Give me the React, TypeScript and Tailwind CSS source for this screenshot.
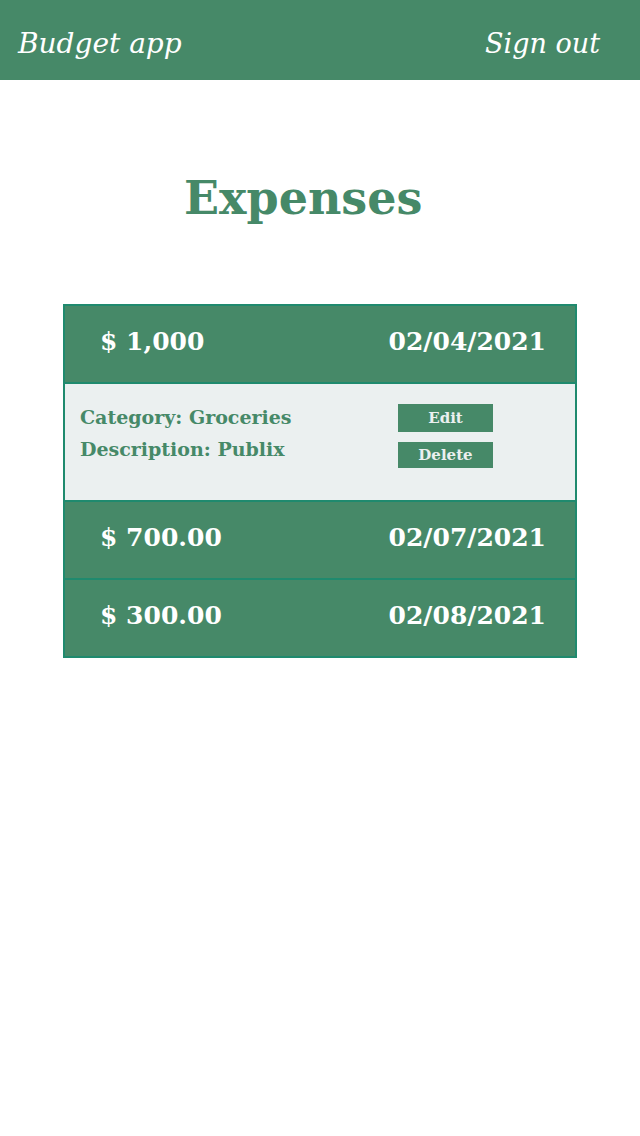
const expenses = [
  { amount: '$ 1,000', date: '02/04/2021', category: 'Groceries', description: 'Publix', open: true },
  { amount: '$ 700.00', date: '02/07/2021', open: false },
  { amount: '$ 300.00', date: '02/08/2021', open: false },
];

const slab = { fontFamily: '"DejaVu Serif", "Liberation Serif", serif' };

export default function App() {
  return (
    <div className="min-h-[1136px] w-[640px] bg-white" style={slab}>
      <header className="flex h-[80px] items-center justify-between bg-[#468968] pl-[18px] pr-[40px] pt-[8px] text-white">
        <span className="text-[28px] italic">Budget app</span>
        <span className="text-[27px] italic">Sign out</span>
      </header>

      <h1 className="mt-[95px] pl-[184px] text-[46px] font-bold leading-none text-[#468968]">Expenses</h1>

      <div className="mx-[63px] mt-[83px] border-2 border-[#1f8a6e]">
        {expenses.map((e, i) => (
          <div key={e.date} className={i > 0 ? 'border-t-2 border-[#1f8a6e]' : ''}>
            <div className="flex h-[76px] items-center justify-between bg-[#468968] pb-[5px] pl-[35px] pr-[29px] font-bold text-white">
              <span className="text-[25px]">{e.amount}</span>
              <span className="text-[25px]">{e.date}</span>
            </div>
            {e.open && (
              <div className="flex h-[118px] border-t-2 border-[#1f8a6e] bg-[#ebf0f0] pl-[15px] pt-[20px]">
                <div className="flex w-[318px] flex-col gap-[6px] text-[19px] font-bold leading-[26px] text-[#468968]">
                  <span>Category: {e.category}</span>
                  <span>Description: {e.description}</span>
                </div>
                <div className="flex flex-col gap-[10px]">
                  <button className="h-[28px] w-[95px] bg-[#468968] text-[15px] font-bold text-[#ebf0f0]">Edit</button>
                  <button className="h-[26px] w-[95px] bg-[#468968] text-[15px] font-bold text-[#ebf0f0]">Delete</button>
                </div>
              </div>
            )}
          </div>
        ))}
      </div>
    </div>
  );
}
